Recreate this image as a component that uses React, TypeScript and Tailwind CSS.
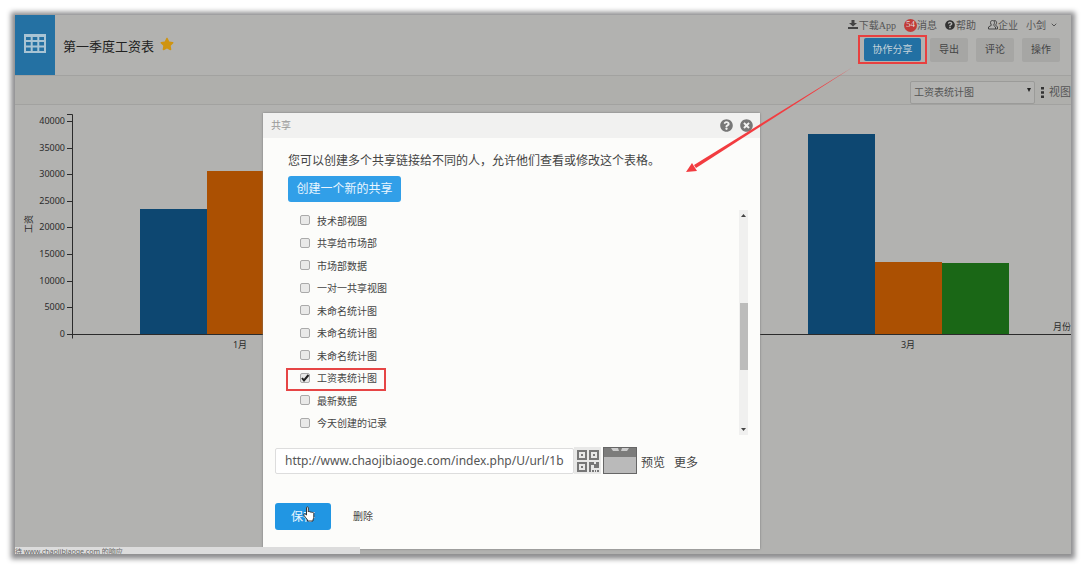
import React, { useState } from 'react';
import { FaQuestionCircle, FaStar, FaTimesCircle } from 'react-icons/fa';
import { ChevronDown } from 'lucide-react';

const views = [
  '技术部视图',
  '共享给市场部',
  '市场部数据',
  '一对一共享视图',
  '未命名统计图',
  '未命名统计图',
  '未命名统计图',
  '工资表统计图',
  '最新数据',
  '今天创建的记录',
];

const ACTIVE_VIEW = 7;

const ticks = [0, 5000, 10000, 15000, 20000, 25000, 30000, 35000, 40000];

const bars = [
  { x: 125, value: 23400, color: '#0d4771' },
  { x: 192, value: 30600, color: '#ab5002' },
  { x: 793, value: 37600, color: '#0d4771' },
  { x: 860, value: 13500, color: '#ab5002' },
  { x: 927, value: 13400, color: '#1a6716' },
];

const BASE_Y = 229;
const yFor = (value: number) => BASE_Y - Math.round((value * 213) / 40000);

const TableIcon = () => (
  <svg width="22" height="19" viewBox="0 0 22 19" fill="none" stroke="#a9c4d4" strokeWidth="2">
    <path d="M1 1.5h20v16.500H1z M1 7h20 M1 12.500h20 M7.700 2v16 M14.300 2v16" />
    <path d="M0 1.500h22" strokeWidth="3" />
  </svg>
);

const DownloadIcon = () => (
  <svg width="10" height="10" viewBox="0 0 10 10" fill="#444">
    <path d="M3.500 0h3v3H9L5 6.500 1 3h2.500z M0 7h10v2H0z" />
  </svg>
);

const CompanyIcon = () => (
  <svg width="10" height="10" viewBox="0 0 10 10" fill="none" stroke="#444">
    <path d="M2.500 2.500c0-2.700 4-2.700 4 0 0 1.500-.7 2.200-1 2.700L7.500 7v2h-7V7l3-1.800c-.5-.7-1-1.300-1-2.700z M6 .8c3-.8 3.200 2.700 1.500 4.200L9.500 7v2h-2" />
  </svg>
);

const QrIcon = () => (
  <svg width="22" height="22" viewBox="0 0 22 22" fill="none" stroke="#777" strokeWidth="2">
    <path d="M1 1h8v8H1z M13 1h8v8h-8z M1 13h8v8H1z" />
    <path
      fill="#777"
      stroke="none"
      d="M4 4h2v2H4z M16 4h2v2h-2z M4 16h2v2H4z M12 12h5v2h2v-2h3v6h-5v-3h-3v7h-2z M15 20h2v2h-2z M18 20h1v2h-1z M20 20h2v2h-2z"
    />
  </svg>
);

const HandCursor = () => (
  <svg width="12" height="16" viewBox="0 0 12 16" fill="#fff" stroke="#333">
    <path d="M3.500 9V1.800c0-1.300 1.800-1.300 1.800 0V6c.3-.8 1.700-.7 1.800.3.400-.7 1.700-.5 1.800.4.600-.6 1.900-.3 1.900.8v3.800c0 1-.8 1.700-.8 2.700v1H4.500v-1C3.500 12.500 2 11 .9 9.300c-.6-1.100.7-1.900 1.500-1.100z" />
  </svg>
);

const SalaryChart = () => (
  <svg viewBox="0 0 1056 449" className="block w-full" fontSize="9" fill="#2b2b2b">
    {bars.map(bar => (
      <rect key={bar.x} x={bar.x} y={yFor(bar.value)} width="67" height={BASE_Y - yFor(bar.value)} fill={bar.color} />
    ))}
    <path d="M52 9.500h5.500v224 M52 229.500h1004" fill="none" stroke="#2b2b2b" />
    {ticks.map(tick => (
      <g key={tick}>
        <path d={`M52 ${yFor(tick) + 0.5}h5`} stroke="#2b2b2b" />
        <text x="50" y={yFor(tick) + 3} textAnchor="end">{tick}</text>
      </g>
    ))}
    <text x="225" y="243" textAnchor="middle">1月</text>
    <text x="893" y="243" textAnchor="middle">3月</text>
    <text x="1056" y="225" textAnchor="end">月份</text>
    <text transform="translate(17 119) rotate(-90)" textAnchor="middle">工资</text>
  </svg>
);

const Header = () => (
  <header className="flex h-[60px] items-start">
    <div className="flex h-full w-10 items-center justify-center bg-[#2471a3] pb-1">
      <TableIcon />
    </div>
    <h1 className="ml-2 flex h-full items-center pt-1 text-[13px] text-[#222]">第一季度工资表</h1>
    <FaStar className="mt-[22px] ml-[6px] text-[#cf9410]" size={14} />
    <div className="ml-auto flex flex-col items-end">
      <nav className="mr-[13px] flex h-5 items-center gap-2 font-['Liberation_Serif','Noto_Sans_CJK_SC',serif] text-[10px] text-[#555]">
        <a href="#app" className="flex items-center gap-px"><DownloadIcon />下载App</a>
        <a href="#messages" className="flex items-center">
          <span className="flex size-[13px] items-center justify-center rounded-full bg-[#c23b38] text-[9px] text-[#ddd]">54</span>
          消息
        </a>
        <a href="#help" className="mr-1 flex items-center gap-px"><FaQuestionCircle className="text-[#333]" />帮助</a>
        <a href="#company" className="flex items-center"><CompanyIcon />企业</a>
        <button type="button" className="flex items-center gap-1">小剑<ChevronDown size={8} strokeWidth={3} /></button>
      </nav>
      <div className="mr-[11px] flex items-center gap-2 text-[10px]">
        <div className="-mr-[5px] border-2 border-[#e8403f] px-1 py-[1px]">
          <button type="button" className="block h-[23px] w-[57px] rounded-xs bg-[#2270a3] text-[#c5d3da]">协作分享</button>
        </div>
        <button type="button" className="h-6 w-[38px] rounded-xs bg-[#a6a6a4] text-[#444]">导出</button>
        <button type="button" className="h-6 w-[38px] rounded-xs bg-[#a6a6a4] text-[#444]">评论</button>
        <button type="button" className="h-6 w-[38px] rounded-xs bg-[#a6a6a4] text-[#444]">操作</button>
      </div>
    </div>
  </header>
);

const Toolbar = () => (
  <div className="flex h-[30px] items-end justify-end border-y border-[#a2a2a0] bg-[#afafac]">
    <div className="relative">
      <select aria-label="视图" className="h-[23px] w-[125px] appearance-none rounded-xs border border-[#9b9b99] bg-[#b3b3b1] pl-[3px] text-[10px] text-[#555]">
        <option>工资表统计图</option>
      </select>
      <svg className="pointer-events-none absolute top-[10px] right-1" width="4" height="4" viewBox="0 0 4 4" fill="#222">
        <path d="M0 0h4L2 4z" />
      </svg>
    </div>
    <button type="button" className="ml-[6px] flex h-[23px] items-center gap-[5px] text-[11px] text-[#555]">
      <svg width="3" height="11" viewBox="0 0 3 11" fill="#333">
        <path d="M0 0h3v2.500H0z M0 4.200h3v2.500H0z M0 8.500h3V11H0z" />
      </svg>
      视图
    </button>
  </div>
);

const ShareDialog: React.FC = () => {
  const [checked, setChecked] = useState(views.map((_, i) => i === ACTIVE_VIEW));
  const [url, setUrl] = useState('http://www.chaojibiaoge.com/index.php/U/url/1b');

  const toggle = (index: number) => setChecked(checked.map((c, i) => (i === index ? !c : c)));

  return (
    <div role="dialog" aria-label="共享" className="absolute top-[98px] left-[248px] w-[497px] bg-[#fcfcfa] pb-[19px] text-[#444] shadow-[0_0_2px_#777]">
      <div className="flex h-[25px] items-center gap-[7px] bg-[#f1f1f0] pr-[7px] pb-px pl-2 text-[#777]">
        <h2 className="mr-auto text-[10px] text-[#999]">共享</h2>
        <button type="button" aria-label="帮助"><FaQuestionCircle size={13} /></button>
        <button type="button" aria-label="关闭"><FaTimesCircle size={13} /></button>
      </div>

      <div className="pr-[12px] pl-[25px]">
        <p className="pt-[15px] text-[12px] leading-4">您可以创建多个共享链接给不同的人，允许他们查看或修改这个表格。</p>
        <button type="button" className="mt-[7px] block h-[26px] w-[113px] rounded-[3px] bg-[#319fe8] text-[12px] text-[#e9f6ff]">创建一个新的共享</button>
        <div className="mt-2 flex h-[225px] justify-between">
          <ul className="grid auto-rows-fr text-[10px]">
            {views.map((view, i) => (
              <li key={i} className="relative flex items-center">
                <label className="flex items-center gap-[7px] pl-3">
                  <span className="grid pb-[2px]">
                    <input
                      type="checkbox"
                      checked={checked[i]}
                      onChange={() => toggle(i)}
                      className="peer col-start-1 row-start-1 size-[10px] appearance-none rounded-xs border border-[#aaa] bg-[#e9e9e8]"
                    />
                    <svg className="pointer-events-none invisible col-start-1 row-start-1 peer-checked:visible" width="10" height="10" viewBox="0 0 10 10" fill="none" stroke="#222" strokeWidth="2">
                      <path d="M2 5l2 2.500L8.500 2" />
                    </svg>
                  </span>
                  {view}
                </label>
                {i === ACTIVE_VIEW && (
                  <span className="pointer-events-none absolute top-0 -bottom-px -left-[2px] w-[100px] border-2 border-[#e64545]" />
                )}
              </li>
            ))}
          </ul>
          <div className="flex w-[9px] flex-col items-center justify-between bg-[#f0f0ef] py-1">
            <svg width="5" height="3" viewBox="0 0 5 3" fill="#444"><path d="M0 3h5L2.500 0z" /></svg>
            <div className="mt-7 h-[67px] w-2 bg-[#bcbcbb]" />
            <svg width="5" height="3" viewBox="0 0 5 3" fill="#444"><path d="M0 0h5L2.500 3z" /></svg>
          </div>
        </div>
      </div>

      <div className="mt-3 flex items-center px-3 text-[12px]">
        <input
          type="text"
          aria-label="共享链接"
          value={url}
          onChange={e => setUrl(e.target.value)}
          className="h-[26px] w-[299px] rounded-xs border border-[#ddd] bg-white px-[9px] text-[12px] text-[#555]"
        />
        <button type="button" aria-label="二维码" className="flex size-[27px] items-center justify-center bg-[#e8e8e7]">
          <QrIcon />
        </button>
        <button type="button" aria-label="邮件" className="ml-[2px] h-[27px] w-[34px] border border-[#666] bg-[#bababa]">
          <svg width="32" height="25" viewBox="0 0 32 25">
            <path d="M0 0h32v9H0z" fill="#7c7c7b" />
            <path d="M7 0h7l1 3H9z M18 0h7l-2 3h-6z" fill="#ccc" />
          </svg>
        </button>
        <a href="#preview" className="ml-1 pt-1">预览</a>
        <a href="#more" className="ml-[9px] pt-1">更多</a>
      </div>

      <div className="mt-[29px] flex items-center px-3">
        <div className="relative">
          <button type="button" className="block h-[27px] w-14 rounded-[3px] bg-[#2196e3] text-[12px] text-[#e9f6ff]">保存</button>
          <span className="pointer-events-none absolute top-[3px] left-7"><HandCursor /></span>
        </div>
        <button type="button" className="ml-[22px] text-[10px]">删除</button>
      </div>
    </div>
  );
};

const App: React.FC = () => (
  <div className="min-h-screen bg-white p-[15px] font-['Noto_Sans','Noto_Sans_CJK_SC',sans-serif]">
    <main className="relative bg-[#b2b2b0] shadow-[0_1px_5px_4px_#8e8e90]">
      <Header />
      <Toolbar />
      <SalaryChart />
      <ShareDialog />
      <div className="absolute bottom-0 left-0 h-[7px] w-[345px] overflow-hidden bg-[#dcdcdc] text-[7px] leading-[10px] text-[#666]">
        待 www.chaojibiaoge.com 的响应
      </div>
      {/* arrow from the share button to the dialog */}
      <svg className="pointer-events-none absolute top-[50px] left-[670px]" width="170" height="110" viewBox="0 0 170 110" fill="#f23c40">
        <path d="M168 2L11 103 9 100z" />
        <path d="M1 107l6-9 5 8z" />
      </svg>
    </main>
  </div>
);

export default App;
